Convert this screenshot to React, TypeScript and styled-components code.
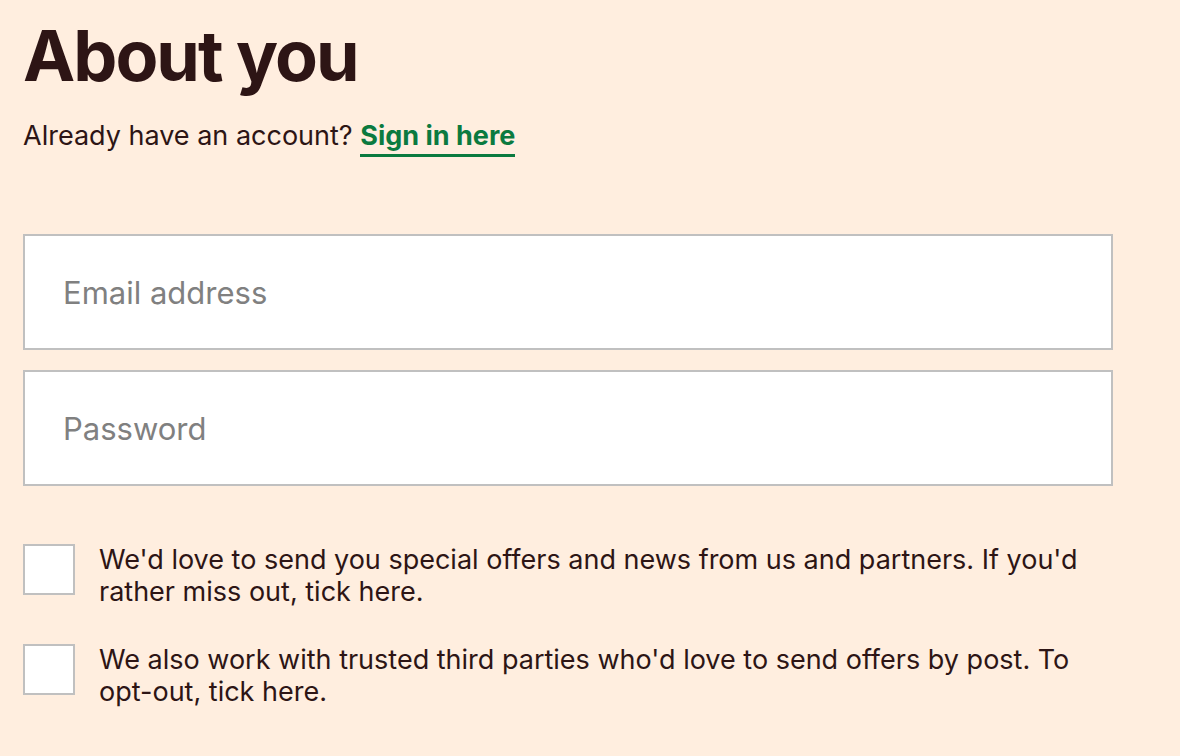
import React from "react";
import styled, { createGlobalStyle } from "styled-components";

const Global = createGlobalStyle`
  html, body { margin: 0; padding: 0; background: #ffeedf; }
  body { font-family: "Inter", "Liberation Sans", sans-serif; color: #2d1515; }
`;

const Page = styled.main`
  box-sizing: border-box;
  width: 1180px;
  min-height: 756px;
  padding: 14px 0 0 23px;
  background: #ffeedf;
`;

const Title = styled.h1`
  margin: 0;
  font-family: "Inter", sans-serif;
  font-weight: 700;
  font-size: 70px;
  line-height: 84px;
  letter-spacing: -2px;
  color: #2d1515;
`;

const Lead = styled.p`
  margin: 21px 0 0;
  font-size: 27px;
  line-height: 34px;
  color: #2d1515;
`;

const SignIn = styled.a`
  color: #0b7a3f;
  font-weight: 700;
  text-decoration: none;
  border-bottom: 3px solid #0b7a3f;
  padding-bottom: 2px;
  cursor: pointer;
`;

const Fields = styled.div`
  display: flex;
  flex-direction: column;
  gap: 20px;
  margin-top: 81px;
  width: 1090px;
`;

const Input = styled.input`
  box-sizing: border-box;
  width: 100%;
  height: 116px;
  border: 2px solid #c0c0c0;
  background: #fff;
  padding: 0 38px;
  font-family: "Inter", sans-serif;
  font-size: 31px;
  color: #2d1515;
  outline: none;
  &::placeholder { color: #808080; }
`;

const Options = styled.div`
  display: flex;
  flex-direction: column;
  gap: 36px;
  margin-top: 58px;
  width: 1090px;
`;

const Option = styled.label`
  display: flex;
  align-items: flex-start;
  gap: 24px;
  cursor: pointer;
`;

const Box = styled.span`
  flex: none;
  box-sizing: border-box;
  width: 52px;
  height: 51px;
  border: 2px solid #c0c0c0;
  background: #fff;
`;

const OptionText = styled.span`
  font-size: 27px;
  line-height: 32px;
  color: #2d1515;
`;

export default function App() {
  return (
    <Page>
      <Global />
      <Title>About you</Title>
      <Lead>
        Already have an account? <SignIn>Sign in here</SignIn>
      </Lead>
      <Fields>
        <Input type="email" placeholder="Email address" />
        <Input type="password" placeholder="Password" />
      </Fields>
      <Options>
        <Option>
          <Box />
          <OptionText>
            We'd love to send you special offers and news from us and partners. If you'd rather miss out, tick here.
          </OptionText>
        </Option>
        <Option>
          <Box />
          <OptionText>
            We also work with trusted third parties who'd love to send offers by post. To opt-out, tick here.
          </OptionText>
        </Option>
      </Options>
    </Page>
  );
}
